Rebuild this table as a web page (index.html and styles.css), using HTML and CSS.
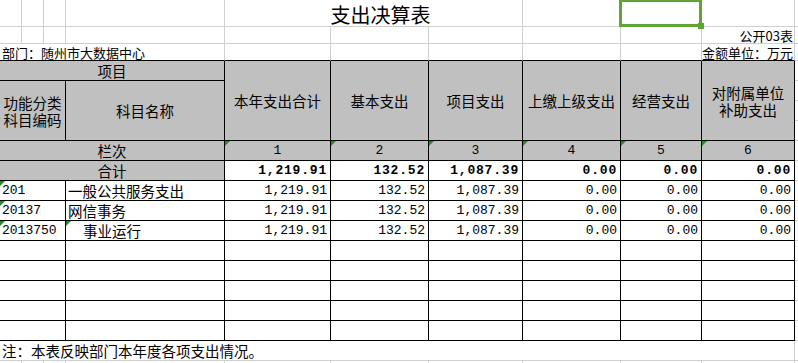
FILE: index.html
```html
<!DOCTYPE html>
<html lang="zh-CN">
<head>
<meta charset="utf-8">
<title>支出决算表</title>
<link rel="stylesheet" href="styles.css">
</head>
<body>
<div class="sheet">
  <!-- row 1 -->
  <div class="c"></div><div class="c"></div><div class="c"></div><div class="c"></div>
  <div class="c span3 title">支出决算表</div>
  <div class="c"></div>
  <div class="c"><div class="sel"></div><div class="handle"></div></div>
  <div class="c"></div>
  <div class="c k"></div>
  <!-- row 2 -->
  <div class="c"></div><div class="c"></div><div class="c"></div><div class="c"></div>
  <div class="c"></div><div class="c"></div><div class="c"></div><div class="c"></div><div class="c"></div>
  <div class="c small right">公开03表</div>
  <div class="c k"></div>
  <!-- row 3 -->
  <div class="c bb span4 small bottom">部门：随州市大数据中心</div>
  <div class="c bb"></div><div class="c bb"></div><div class="c bb"></div><div class="c bb"></div><div class="c bb"></div>
  <div class="c bb small right">金额单位：万元</div>
  <div class="c k"></div>
  <!-- row 4 -->
  <div class="c t hd span4">项目</div>
  <div class="c t hd rs4">本年支出合计</div>
  <div class="c t hd rs4">基本支出</div>
  <div class="c t hd rs4">项目支出</div>
  <div class="c t hd rs4">上缴上级支出</div>
  <div class="c t hd rs4">经营支出</div>
  <div class="c t hd rs4 two">对附属单位<br>补助支出</div>
  <div class="c k"></div>
  <!-- row 5-7 -->
  <div class="c t hd span3 rs3 two">功能分类<br>科目编码</div>
  <div class="c t hd rs3">科目名称</div>
  <div class="c k"></div>
  <div class="c k"></div>
  <div class="c k"></div>
  <!-- row 8 -->
  <div class="c t hd span4">栏次</div>
  <div class="c t hd tri mono">1</div>
  <div class="c t hd tri mono">2</div>
  <div class="c t hd tri mono">3</div>
  <div class="c t hd tri mono">4</div>
  <div class="c t hd tri mono">5</div>
  <div class="c t hd tri mono">6</div>
  <div class="c k"></div>
  <!-- row 9 -->
  <div class="c t hd span4">合计</div>
  <div class="c t num bold">1,219.91</div>
  <div class="c t num bold">132.52</div>
  <div class="c t num bold">1,087.39</div>
  <div class="c t num bold">0.00</div>
  <div class="c t num bold">0.00</div>
  <div class="c t num bold">0.00</div>
  <div class="c k"></div>
  <!-- row 10 -->
  <div class="c t span3 tri code">201</div>
  <div class="c t name">一般公共服务支出</div>
  <div class="c t num">1,219.91</div>
  <div class="c t num">132.52</div>
  <div class="c t num">1,087.39</div>
  <div class="c t num">0.00</div>
  <div class="c t num">0.00</div>
  <div class="c t num">0.00</div>
  <div class="c k"></div>
  <!-- row 11 -->
  <div class="c t span3 tri code">20137</div>
  <div class="c t name">网信事务</div>
  <div class="c t num">1,219.91</div>
  <div class="c t num">132.52</div>
  <div class="c t num">1,087.39</div>
  <div class="c t num">0.00</div>
  <div class="c t num">0.00</div>
  <div class="c t num">0.00</div>
  <div class="c k"></div>
  <!-- row 12 -->
  <div class="c t span3 tri code">2013750</div>
  <div class="c t name tri indent">事业运行</div>
  <div class="c t num">1,219.91</div>
  <div class="c t num">132.52</div>
  <div class="c t num">1,087.39</div>
  <div class="c t num">0.00</div>
  <div class="c t num">0.00</div>
  <div class="c t num">0.00</div>
  <div class="c k"></div>
  <!-- rows 13-17 -->
  <div class="c t span3"></div><div class="c t"></div><div class="c t"></div><div class="c t"></div><div class="c t"></div><div class="c t"></div><div class="c t"></div><div class="c t"></div><div class="c k"></div>
  <div class="c t span3"></div><div class="c t"></div><div class="c t"></div><div class="c t"></div><div class="c t"></div><div class="c t"></div><div class="c t"></div><div class="c t"></div><div class="c k"></div>
  <div class="c t span3"></div><div class="c t"></div><div class="c t"></div><div class="c t"></div><div class="c t"></div><div class="c t"></div><div class="c t"></div><div class="c t"></div><div class="c k"></div>
  <div class="c t span3"></div><div class="c t"></div><div class="c t"></div><div class="c t"></div><div class="c t"></div><div class="c t"></div><div class="c t"></div><div class="c t"></div><div class="c k"></div>
  <div class="c t span3"></div><div class="c t"></div><div class="c t"></div><div class="c t"></div><div class="c t"></div><div class="c t"></div><div class="c t"></div><div class="c t"></div><div class="c k"></div>
  <!-- row 18 -->
  <div class="c span10 note">注：本表反映部门本年度各项支出情况。</div>
  <div class="c k"></div>
  <!-- row 19 -->
  <div class="c"></div><div class="c"></div><div class="c"></div><div class="c"></div><div class="c"></div>
  <div class="c"></div><div class="c"></div><div class="c"></div><div class="c"></div><div class="c"></div>
  <div class="c k"></div>
</div>
</body>
</html>
```
FILE: styles.css
```css
html, body {
  margin: 0;
  padding: 0;
  background: #ffffff;
}
body {
  width: 798px;
  height: 363px;
  overflow: hidden;
  font-family: "Noto Sans CJK SC", "Noto Sans", sans-serif;
  color: #000000;
}
.sheet {
  display: grid;
  grid-template-columns: 22px 22px 22px 159px 106px 98px 94px 98px 81px 93px 1fr;
  grid-template-rows: 27px 17px 17px repeat(16, 20px);
}
.c {
  box-sizing: border-box;
  border-right: 1px solid #cfcfcf;
  border-bottom: 1px solid #cfcfcf;
  display: flex;
  align-items: center;
  min-width: 0;
  white-space: nowrap;
  position: relative;
  font-size: 14.5px;
  line-height: 18px;
}
.k { border-right: none; }
.t { border-right-color: #000000; border-bottom-color: #000000; }
.bb { border-bottom-color: #000000; }
.hd {
  background: #c0c0c0;
  justify-content: center;
  text-align: center;
}
.two { line-height: 17px; }
.span3 { grid-column: span 3; }
.span4 { grid-column: span 4; }
.span10 { grid-column: span 10; }
.rs3 { grid-row: span 3; }
.rs4 { grid-row: span 4; }
.title {
  font-size: 20px;
  line-height: normal;
  align-items: flex-start;
  justify-content: center;
  padding-left: 14px;
}
.small { font-size: 13px; line-height: 15px; }
.right { justify-content: flex-end; align-items: flex-end; padding-right: 1px; }
.bottom { align-items: flex-end; padding-left: 2px; }
.mono {
  font-family: "Liberation Mono", monospace;
  font-size: 13px;
}
.num {
  font-family: "Liberation Mono", monospace;
  font-size: 13px;
  justify-content: flex-end;
  padding-right: 3px;
}
.bold { font-weight: bold; letter-spacing: 0.8px; }
.code {
  font-family: "Liberation Mono", monospace;
  font-size: 13px;
  padding-left: 2px;
}
.name { padding-left: 2px; }
.indent { padding-left: 17px; }
.note { padding-left: 2px; }
.tri::before {
  content: "";
  position: absolute;
  left: 0;
  top: 0;
  border-style: solid;
  border-width: 5px 5px 0 0;
  border-color: #1f8f1f transparent transparent transparent;
}
.sel {
  position: absolute;
  left: -2px;
  top: -1px;
  width: 83px;
  height: 28px;
  box-sizing: border-box;
  border: 3px solid #5fa535;
  z-index: 2;
}
.handle {
  position: absolute;
  left: 77px;
  top: 23px;
  width: 6px;
  height: 6px;
  background: #5fa535;
  z-index: 3;
}
```
